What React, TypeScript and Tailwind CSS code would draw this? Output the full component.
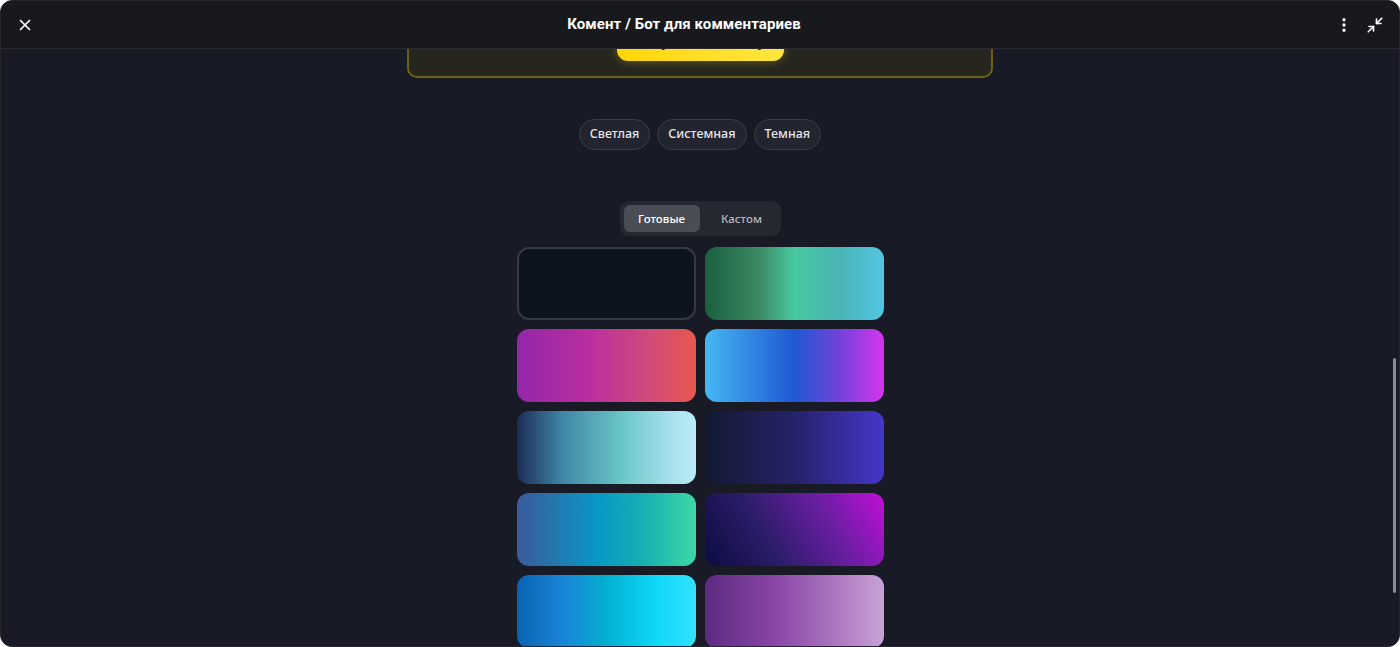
import React from "react";
import { X, EllipsisVertical, Minimize2 } from "lucide-react";

const gradients: string[] = [
  "",
  "bg-[linear-gradient(90deg,#1a5f3f_0%,#3c8a62_30%,#47c9a1_50%,#4ab4b4_75%,#52c6e4_100%)]",
  "bg-[linear-gradient(90deg,#9227aa_0%,#b92e9f_40%,#cf4a7c_72%,#e8584e_100%)]",
  "bg-[linear-gradient(90deg,#45b8f2_0%,#1f58d2_50%,#7242da_75%,#d635ee_100%)]",
  "bg-[linear-gradient(90deg,#1c2d56_0%,#3f86a6_25%,#6cc8c8_60%,#a6e0ec_85%,#b8ecf8_100%)]",
  "bg-[linear-gradient(90deg,#121a30_0%,#252269_50%,#4536c9_100%)]",
  "bg-[linear-gradient(90deg,#3b5a9c_0%,#0898c4_45%,#16afb2_70%,#3dd8a4_100%)]",
  "bg-[linear-gradient(60deg,#0b0c40_0%,#2c1d6a_35%,#6a1ea2_68%,#c00fd8_100%)]",
  "bg-[linear-gradient(90deg,#0962b2_0%,#1a84d8_25%,#02b0d0_50%,#10d8f8_78%,#32e2ff_100%)]",
  "bg-[linear-gradient(90deg,#5d2a80_0%,#8a46a8_40%,#b684c6_82%,#c8a2d8_100%)]",
];

export default function App() {
  return (
    <div className="h-[647px] w-[1400px] overflow-hidden rounded-[12px] border border-[#26272c] bg-[#181b26] flex flex-col relative font-['Noto_Sans',sans-serif]">
      <header className="h-[48px] shrink-0 bg-[#18191d] border-b border-[#2a2b31] flex items-center justify-between pl-[15px] pr-[15px] relative z-10">
        <X className="w-[18px] h-[18px] text-white" strokeWidth={2.2} />
        <div className="absolute left-0 right-0 top-0 h-[47px] flex items-center justify-center pointer-events-none">
          <span className="text-white text-[15px] font-bold font-['Roboto',sans-serif] tracking-[0.1px] ml-[-32px]">
            Комент / Бот для комментариев
          </span>
        </div>
        <div className="flex items-center gap-[13px]">
          <EllipsisVertical className="w-[18px] h-[18px] text-white" strokeWidth={2.4} />
          <Minimize2 className="w-[18px] h-[18px] text-white" strokeWidth={2.2} />
        </div>
      </header>

      <main className="flex-1 overflow-hidden relative">
        <div className="flex flex-col items-center -mt-[30px]">
          <div className="w-[586px] h-[59px] rounded-[10px] border-2 border-[#6e5f17] bg-[#26261f] flex items-start justify-center pt-[4px]">
            <div className="w-[167px] h-[36px] rounded-[11px] bg-[linear-gradient(90deg,#ffd60a,#ffe640)] shadow-[0_0_10px_rgba(255,214,10,0.35)] flex items-center justify-center gap-2 text-[13px] font-semibold text-[#1a1a1a]">
              <span className="w-[10px] h-[10px] rounded-full bg-[#f08060]" />
              <span>Купить подписку</span>
            </div>
          </div>

          <div className="mt-[41px] flex gap-[7px]">
            {["Светлая", "Системная", "Темная"].map((t) => (
              <div
                key={t}
                className="h-[31px] px-[10px] rounded-full border border-[#3a3d48] bg-[#22252f] flex items-center text-[12.5px] font-medium text-[#e4e4e8]"
              >
                {t}
              </div>
            ))}
          </div>

          <div className="mt-[51px] w-[161px] h-[35px] rounded-[9px] bg-[#262831] p-[4px] flex items-center">
            <div className="w-[76px] h-[27px] rounded-[6px] bg-[#4b4d56] flex items-center justify-center text-[11.5px] font-medium text-white">
              Готовые
            </div>
            <div className="flex-1 flex items-center justify-center pl-[7px] text-[11.5px] font-medium text-[#b4b5bc]">
              Кастом
            </div>
          </div>

          <div className="mt-[11px] grid grid-cols-[179px_179px] gap-x-[9px] gap-y-[9px]">
            {gradients.map((g, i) =>
              i === 0 ? (
                <div
                  key={i}
                  className="h-[73px] rounded-[12px] border-2 border-[#363945] bg-[#0e141e]"
                />
              ) : (
                <div key={i} className={`h-[73px] rounded-[12px] ${g}`} />
              )
            )}
          </div>
        </div>
        <div className="absolute right-[3px] top-[309px] w-[3px] h-[235px] rounded-full bg-[#8a8c93]" />
      </main>
    </div>
  );
}
